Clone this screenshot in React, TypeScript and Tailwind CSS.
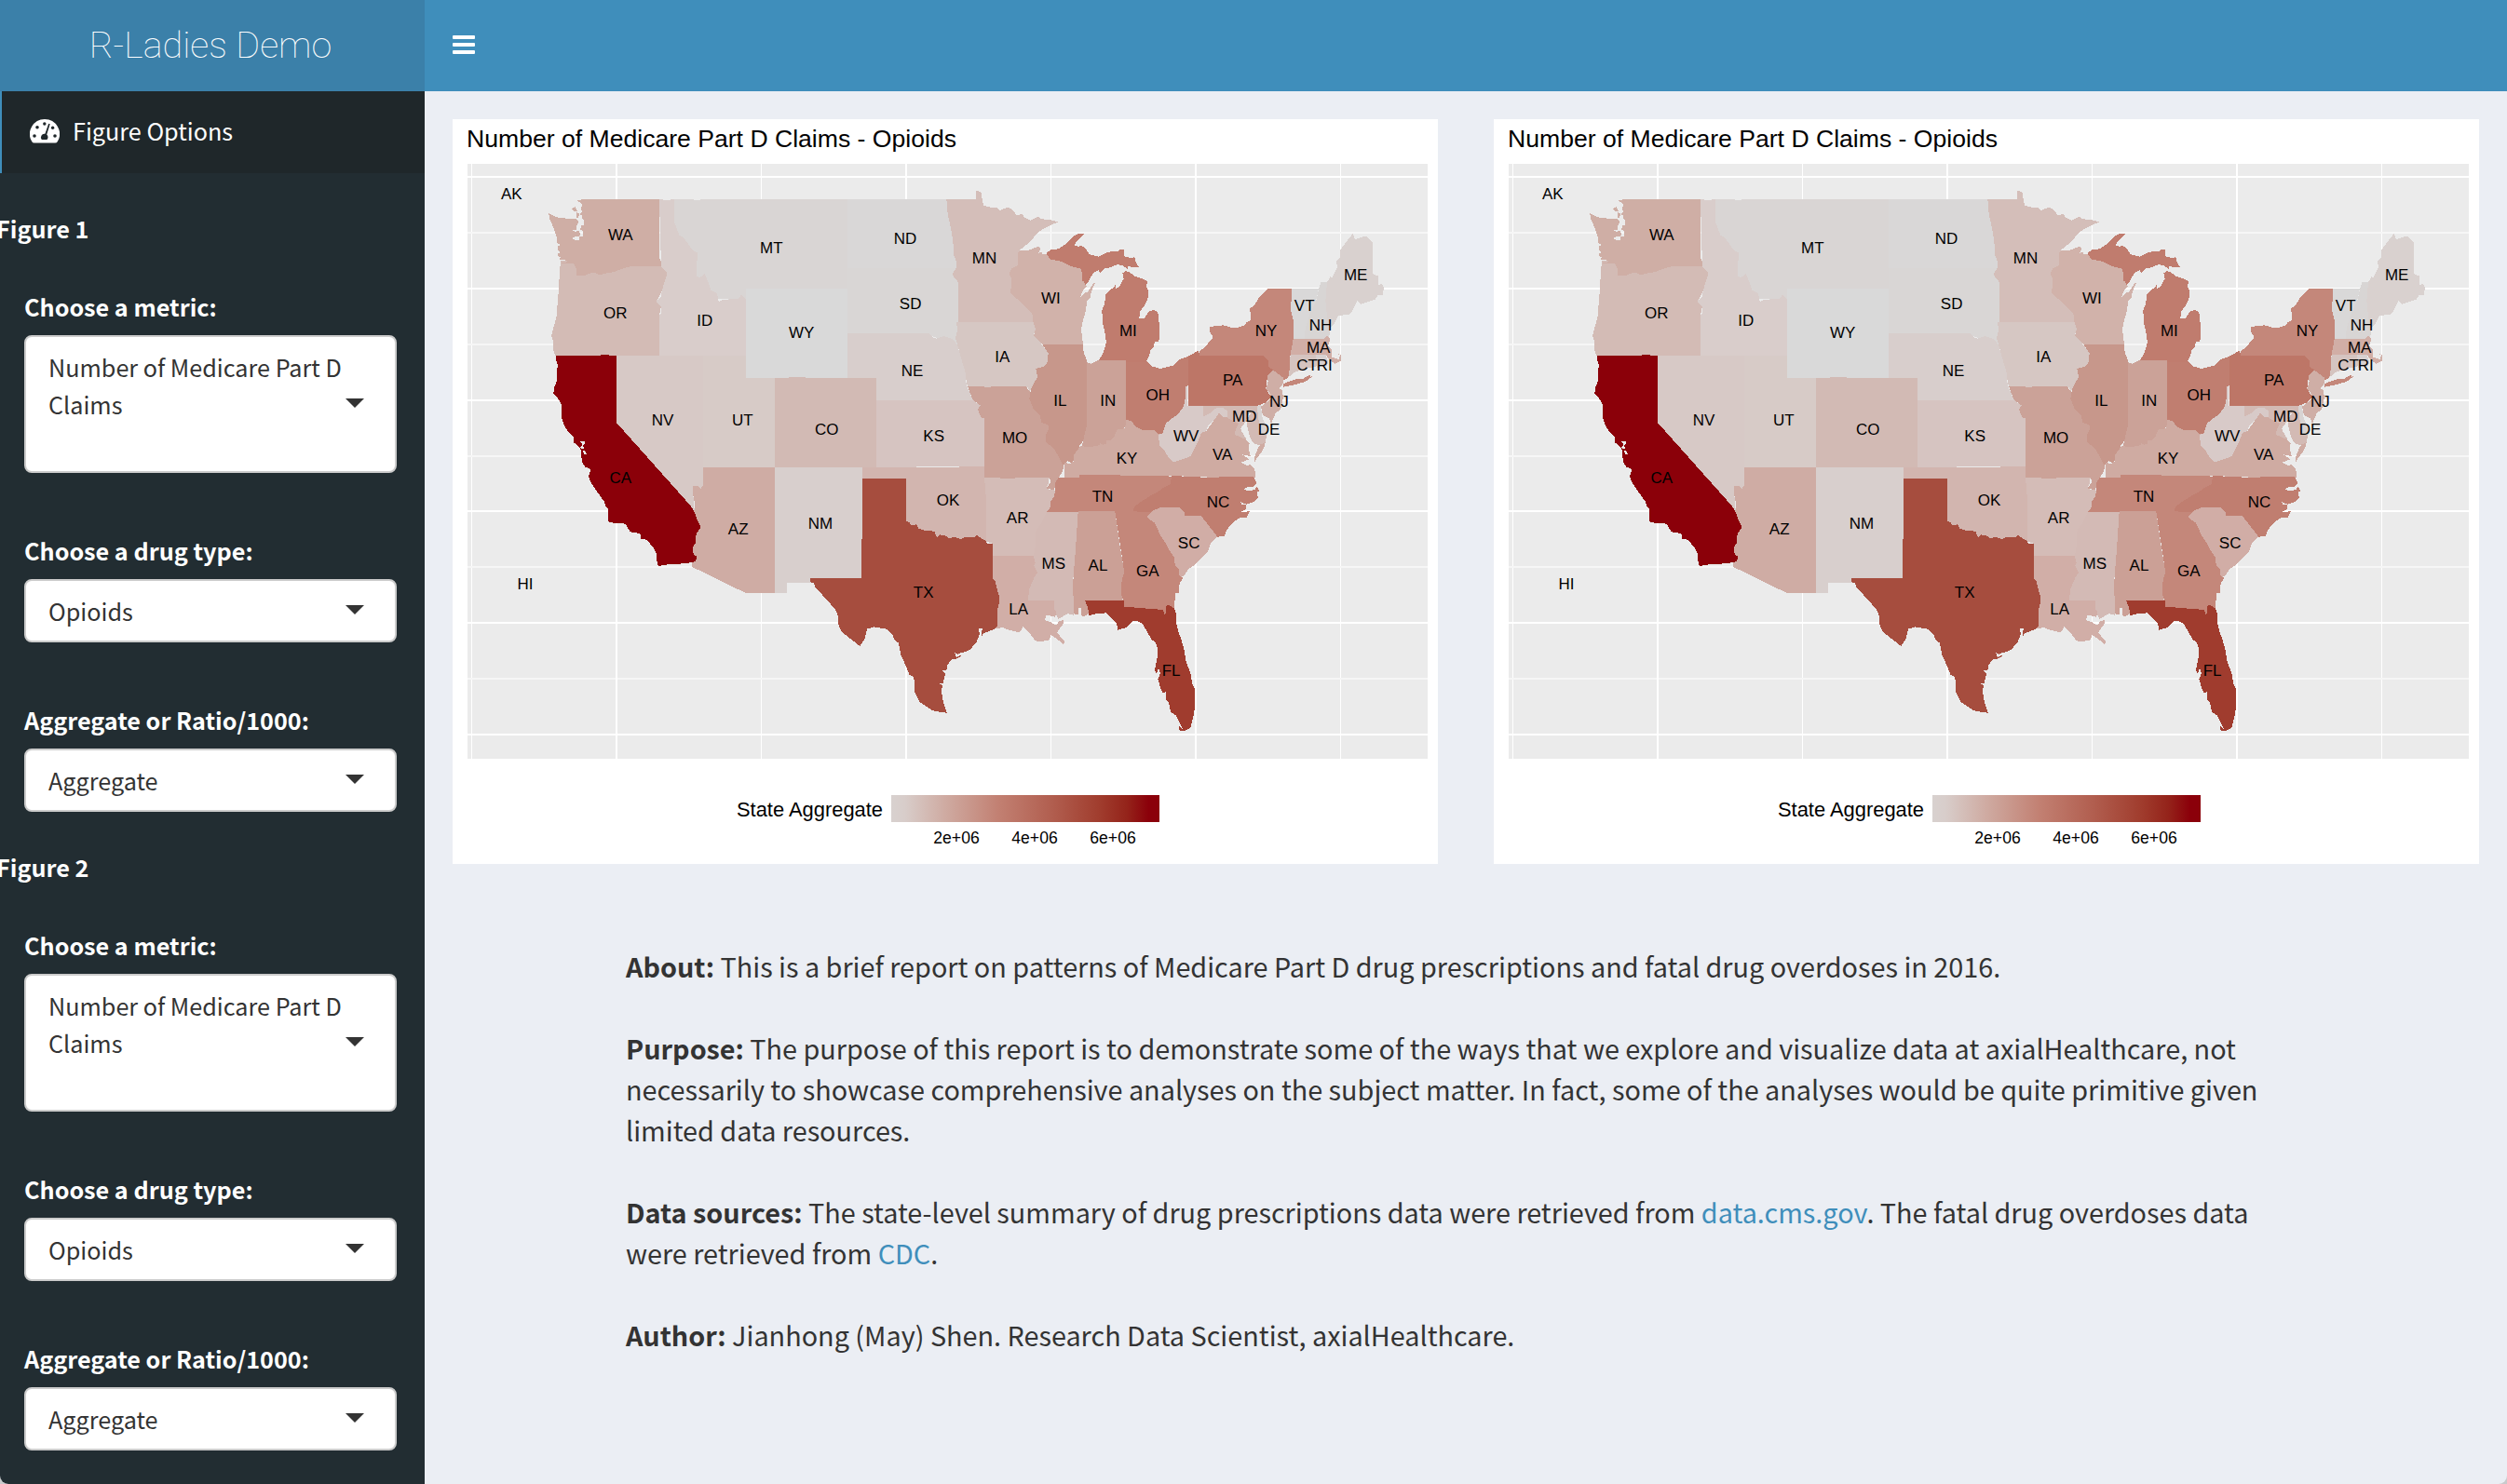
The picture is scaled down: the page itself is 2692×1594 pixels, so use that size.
import { Fragment } from "react";

type Tile = "nw" | "n" | "ne" | "w" | "s" | "se";

const TILES: Record<Tile, string> = {
  nw: "translate(480 120) scale(0.33333)",
  n: "translate(780 180) scale(0.33333)",
  ne: "translate(1100 180) scale(0.33333)",
  w: "translate(560 360) scale(0.33333)",
  s: "translate(850 480) scale(0.33333)",
  se: "translate(1120 440) scale(0.33333)",
};

type Shape = { t: Tile; c: string; p: string };

// State outlines, back to front. Each one is drawn in the units of its map tile.
const SHAPES: Shape[] = [
  { t: "nw", c: "#d9d5d4", p: "732,282 1290,282 1290,575 963,575 963,606 732,600" },
  { t: "nw", c: "#d3bbb5", p: "366,480 690,480 705,515 710,522 700,550 692,578 676,610 690,628 684,655 684,786 348,786 343,770 341,735 336,722 343,695 352,665 356,620 360,570 362,530" },
  { t: "nw", c: "#d9cdcb", p: "684,282 732,282 732,355 745,390 748,398 762,405 790,445 808,455 805,485 803,530 815,534 830,522 840,545 850,575 870,585 875,612 890,606 940,602 948,590 960,602 963,606 963,786 684,786 684,655 690,650 690,628 676,615 676,608 690,595 692,578 700,550 710,522 705,515 690,498" },
  { t: "nw", c: "#cfaea5", p: "441,282 684,282 684,472 690,485 690,498 595,498 560,507 540,516 505,522 495,527 480,520 462,520 440,529 418,527 415,500 405,488 388,490 366,487 388,484 388,480 365,476 360,474 368,468 358,466 358,457 366,453 358,448 358,432 368,429 356,425 352,400 345,378 338,362 330,345 328,327 343,335 360,342 400,345 415,346 424,352 420,365 415,372 418,380 405,380 404,384 415,386 426,384 430,400 412,402 404,408 415,415 425,415 427,402 438,402 438,385 430,380 432,366 440,365 442,352 436,345 436,335 428,330 437,322 430,312 436,300 425,290 418,286" },
  { t: "nw", c: "#cfaea5", p: "402,314 412,306 416,312 420,320 408,320" },
  { t: "nw", c: "#cfaea5", p: "418,325 425,328 424,345 417,340" },
  { t: "nw", c: "#d9d9d9", p: "963,570 1290,570 1290,858 963,858" },
  { t: "nw", c: "#ebebeb", p: "696,281 720,281 720,285 696,285" },
  { t: "nw", c: "#ebebeb", p: "795,281 815,281 815,285 795,285" },
  { t: "w", c: "#d7cbc7", p: "585,66 723,66 723,138 816,138 816,426 585,426" },
  { t: "w", c: "#d7c9c6", p: "306,66 585,66 585,490 577,495 570,486 553,487 553,515 557,565 545,560 306,290" },
  { t: "w", c: "#cfaca4", p: "585,426 816,426 816,831 722,831 550,747 550,735 540,600 557,562 557,535 553,515 553,487 570,486 577,495 585,485" },
  { t: "w", c: "#8b0009", p: "110,66 255,66 255,63 281,63 281,66 306,66 306,282 545,550 557,570 568,600 578,618 563,640 560,670 552,685 554,708 564,712 562,728 553,732 500,738 460,740 442,744 437,735 435,705 425,685 408,665 398,657 383,658 383,642 370,636 350,634 338,613 330,607 285,604 278,597 280,560 270,552 268,538 240,500 222,472 216,455 224,432 205,425 196,410 192,385 190,365 176,350 168,348 168,330 150,312 135,285 128,260 130,225 118,205 103,187 105,170 113,150 115,110 117,95 110,80" },
  { t: "w", c: "#ebebeb", p: "190,343 203,342 203,350 197,356 202,362 198,368 190,362 196,352" },
  { t: "w", c: "#ebebeb", p: "196,372 206,374 210,385 203,385" },
  { t: "w", c: "#d8cfcd", p: "816,426 1098,426 1098,655 1095,657 1095,785 930,785 932,798 855,798 855,831 816,831" },
  { t: "n", c: "#d9d7d7", p: "390,102 709,102 713,150 722,190 730,235 732,280 740,300 740,323 390,323" },
  { t: "n", c: "#d9d6d5", p: "390,323 740,323 737,335 727,345 747,370 747,498 740,500 745,520 738,550 745,573 700,555 652,540 390,534" },
  { t: "n", c: "#d8cecc", p: "390,534 652,534 668,549 678,551 700,543 730,553 745,573 752,600 762,635 770,660 773,700 790,740 795,750 483,750 483,678 390,678" },
  { t: "w", c: "#d2bab4", p: "816,138 862,138 862,135 914,135 914,138 1143,138 1143,426 816,426" },
  { t: "n", c: "#d6c4c1", p: "483,750 795,750 808,760 818,766 810,780 820,805 831,808 831,964 750,964 483,965" },
  { t: "n", c: "#d4beb9", p: "709,102 804,102 804,75 820,78 828,122 850,128 872,130 880,138 905,128 920,134 935,154 952,150 960,160 980,170 1005,158 1015,166 1040,168 1068,175 1020,198 1000,212 980,238 945,266 960,290 960,430 990,475 990,498 747,498 747,370 727,345 740,323 740,300 732,280 730,235 722,190 713,150" },
  { t: "n", c: "#d1b2aa", p: "939,275 945,268 970,268 1008,253 1012,262 1005,275 1018,272 1018,280 1035,280 1090,290 1147,330 1150,360 1160,382 1150,395 1138,420 1155,403 1162,403 1185,370 1187,374 1176,398 1172,420 1162,430 1158,460 1147,500 1143,520 1149,570 1018,570 990,545 996,520 988,498 985,470 955,440 916,405 918,355 910,345 918,325 939,315" },
  { t: "n", c: "#d6c7c3", p: "740,498 988,498 996,520 990,540 1015,568 1037,598 1035,625 1025,640 997,648 1002,675 985,705 978,722 970,708 850,710 778,708 773,690 770,660 762,635 745,573 738,550 745,520" },
  { t: "n", c: "#cba298", p: "778,706 824,706 852,708 852,706 965,706 978,722 1010,760 1070,880 1087,965 1080,985 1070,998 1055,1038 1030,1035 1045,1012 1040,998 930,1002 831,1000 831,808 820,805 810,780 818,766 795,750 790,740" },
  { t: "n", c: "#c7978b", p: "1018,570 1149,570 1151,595 1160,620 1161,830 1155,855 1150,880 1138,895 1135,920 1120,935 1115,955 1100,945 1085,960 1072,935 1055,905 1030,885 1030,860 1040,840 1035,828 1015,822 1010,800 990,780 976,745 980,720 985,705 1002,675 997,648 1025,640 1035,625 1037,598" },
  { t: "ne", c: "#cba298", p: "201,628 215,632 240,620 327,621 327,830 315,850 298,850 290,875 275,885 265,900 220,910 182,905 190,880 195,855 201,830" },
  { t: "ne", c: "#cfaba2", p: "128,998 130,965 128,950 145,955 160,945 160,925 175,905 182,898 215,900 240,895 245,888 252,893 265,890 265,880 278,880 290,865 298,845 325,840 327,812 440,830 480,948 560,990 400,996 178,992 178,998" },
  { t: "ne", c: "#c07e70", p: "327,625 395,625 410,640 437,648 480,638 500,618 528,608 528,700 522,710 520,745 513,770 495,795 470,812 465,830 455,825 445,860 432,858 418,845 400,845 380,846 360,835 345,818 327,812" },
  { t: "ne", c: "#c07c6e", p: "240,621 255,595 263,565 262,545 252,500 250,460 258,440 262,410 275,395 290,385 291,376 295,378 295,390 305,385 315,365 320,360 316,340 326,334 338,336 355,350 385,360 397,368 392,385 400,395 400,415 390,440 372,465 370,485 385,488 400,465 415,458 430,465 433,490 436,530 433,562 420,560 415,580 405,590 403,605 392,626 327,626 327,621" },
  { t: "ne", c: "#c07c6e", p: "70,275 85,265 110,262 135,245 160,220 175,213 192,214 170,235 162,250 175,255 180,250 195,258 210,280 240,287 270,272 300,270 308,265 320,265 320,285 345,292 355,287 358,302 368,320 345,320 332,318 332,328 318,316 300,312 275,322 258,325 243,340 240,330 225,338 215,350 205,370 195,381 192,365 187,365 187,340 180,325 150,318 120,303 82,295" },
  { t: "ne", c: "#cfaba2", p: "640,780 655,800 680,815 695,830 680,845 680,862 705,870 725,890 722,905 728,930 702,925 725,940 698,950 720,962 725,955 742,972 745,998 600,998 475,993 400,993 430,975 475,948 510,940 535,930 560,880 570,855 585,850 610,815 625,790" },
  { t: "ne", c: "#cfaba2", p: "778,865 775,895 765,915 750,935 740,952 742,930 752,905 762,890" },
  { t: "ne", c: "#d3bab4", p: "575,768 755,768 755,820 765,850 780,862 777,885 755,895 738,888 727,870 720,845 715,815 730,790 720,795 712,820 697,840 700,850 717,878 690,865 678,862 680,845 690,825 655,808 640,785 620,780 600,795 575,802" },
  { t: "ne", c: "#d8d3d2", p: "749,768 762,765 765,800 780,840 783,862 765,862 758,840" },
  { t: "ne", c: "#d8cac8", p: "525,703 526,768 575,768 577,802 600,790 620,773 640,775 655,785 655,805 640,803 628,790 610,815 590,835 585,850 570,855 560,880 545,910 535,930 510,940 480,950 465,935 450,910 435,895 432,860 445,858 455,825 470,812 495,795 513,770 518,745 520,705" },
  { t: "ne", c: "#c4877a", p: "565,606 563,592 580,580 605,550 605,540 597,530 597,513 640,508 665,515 690,515 710,508 715,498 730,492 730,470 724,455 740,445 755,420 785,391 862,391 862,450 858,460 866,490 866,555 857,600 853,662 850,675 838,685 800,652 770,640 770,606" },
  { t: "ne", c: "#c4877a", p: "833,708 833,698 855,688 880,680 895,682 912,672 920,668 922,674 930,672 905,690 870,700 848,704" },
  { t: "ne", c: "#bd7667", p: "528,608 560,590 565,606 770,606 785,620 785,640 800,652 783,672 778,712 795,740 775,758 750,768 528,768" },
  { t: "ne", c: "#cfaea6", p: "800,652 835,678 832,700 820,712 832,718 833,745 825,780 810,790 795,825 788,808 768,798 762,770 795,745 792,730 778,712 785,690 783,672" },
  { t: "ne", c: "#d9d8d8", p: "862,391 948,391 930,470 905,553 866,553 866,490 858,460" },
  { t: "ne", c: "#d8d5d4", p: "948,391 955,370 975,368 985,510 982,545 970,554 902,554 905,520 920,470 940,430" },
  { t: "ne", c: "#d9d1cf", p: "975,370 985,352 992,355 1008,320 1005,300 1018,290 1018,265 1040,235 1058,213 1065,232 1085,225 1100,221 1121,240 1121,342 1140,350 1140,378 1150,375 1158,385 1155,410 1140,410 1130,425 1100,435 1085,440 1072,430 1060,455 1050,472 1010,478 1000,500 985,517 975,480 970,430" },
  { t: "ne", c: "#d1aea6", p: "866,553 965,553 975,543 985,552 978,575 990,588 990,610 1012,618 1018,605 1010,600 1020,603 1020,622 1000,632 985,622 970,603 857,603" },
  { t: "ne", c: "#d5c4c0", p: "857,602 940,604 942,640 905,648 870,660 850,676 853,662" },
  { t: "ne", c: "#d8d0d0", p: "940,604 970,603 978,625 975,640 942,645" },
  { t: "se", c: "#c4877a", p: "50,218 117,218 117,209 248,210 248,213 390,214 420,215 420,250 320,328 12,329 25,300 22,292 30,275 40,260 40,235" },
  { t: "se", c: "#c4877a", p: "232,328 350,328 460,480 440,535 452,540 440,560 437,590 427,592 422,640 400,632 397,660 390,664 387,647 262,637 258,615 252,595 254,545 262,525" },
  { t: "se", c: "#c07e70", p: "415,213 515,218 625,217 678,216 686,232 688,248 697,262 690,265 692,285 680,297 655,305 635,297 640,305 655,308 655,320 635,330 665,328 657,347 630,350 605,370 590,390 585,408 560,410 510,343 455,345 380,316 345,330 290,328 293,315 310,300 330,288 350,275 370,265 390,250 410,240" },
  { t: "se", c: "#ebebeb", p: "645,258 662,248 676,250 684,240 690,246 682,258 665,262" },
  { t: "se", c: "#d1ada6", p: "336,345 350,328 375,316 440,316 455,330 457,342 510,343 562,410 540,430 530,460 510,480 490,500 470,512 455,535 445,540 437,530 437,515 425,500 422,475 408,455 395,430 378,405 360,365 345,355" },
  { t: "se", c: "#cba096", p: "113,328 232,328 248,440 262,525 254,545 252,595 258,617 150,620 145,660 130,667 122,660 122,640 115,640 113,660 98,658 96,555 98,545 105,430" },
  { t: "s", c: "#d3bab5", p: "810,209 923,209 915,330 906,440 910,543 890,537 860,555 840,520 760,495 760,400 780,350 780,270" },
  { t: "s", c: "#d4bcb7", p: "621,99 720,102 720,99 830,99 828,115 820,135 850,140 845,160 835,175 832,200 822,210 805,245 790,265 785,280 787,310 780,352 648,352 648,312 627,305 628,180" },
  { t: "s", c: "#d1aea7", p: "648,351 780,351 785,375 780,382 792,405 782,420 765,460 762,495 846,495 845,520 852,530 850,550 840,545 820,543 816,558 835,565 852,575 862,562 875,558 875,570 855,598 880,628 874,637 866,628 845,612 835,606 830,622 800,628 785,625 765,598 745,580 735,598 700,590 680,582 652,587 660,550 668,490 655,430 648,425" },
  { t: "s", c: "#d2b5af", p: "228,66 540,66 540,64 621,64 621,100 628,180 627,310 360,290 369,102 228,102" },
  { t: "s", c: "#a64d3e", p: "228,102 369,102 369,240 380,243 385,252 403,250 408,262 430,270 460,272 468,292 478,283 500,288 505,295 525,290 545,298 560,290 590,290 597,285 625,303 630,311 648,312 648,425 655,430 668,480 668,505 662,530 662,580 655,587 620,600 612,610 614,585 604,585 605,605 595,630 575,653 548,665 545,675 530,683 518,683 500,705 502,718 485,721 495,730 488,762 475,764 486,768 483,790 488,820 500,857 480,855 455,850 412,822 397,790 394,742 380,735 370,710 352,670 345,632 332,622 325,605 305,587 265,580 243,587 235,620 220,642 160,595 150,570 150,545 140,522 115,495 75,450 72,438 60,436 60,424 225,422 225,297 228,297" },
  { t: "s", c: "#ebebeb", p: "526,664 535,668 550,662 545,672 530,678" },
  { t: "se", c: "#a03c2e", p: "135,615 260,615 262,635 387,645 392,662 397,655 397,632 405,630 422,640 430,660 430,690 436,715 445,740 455,775 460,810 475,850 480,880 489,900 489,960 483,995 475,1025 458,1035 440,1036 438,1020 450,1030 440,1010 428,985 412,975 405,945 395,935 395,910 385,912 378,895 370,868 378,850 372,832 366,850 360,840 368,800 368,765 360,747 350,742 335,715 320,690 305,682 290,682 270,702 240,710 238,690 220,672 205,655 175,657 148,663 145,640" },
];

type Label = [string, Tile, number, number];
const LABELS: Label[] = [
  ["AK", "nw", 208, 283], ["WA", "nw", 559, 413], ["OR", "nw", 542, 666], ["ID", "nw", 830, 690],
  ["MT", "nw", 1045, 457], ["WY", "nw", 1142, 729], ["NV", "nw", 695, 1012], ["UT", "nw", 952, 1012],
  ["ND", "n", 576, 247], ["MN", "n", 831, 309], ["SD", "n", 593, 457], ["WI", "n", 1045, 438],
  ["NE", "n", 599, 673], ["IA", "n", 889, 628], ["IL", "n", 1075, 767], ["CO", "n", 323, 861],
  ["KS", "n", 668, 882], ["MO", "n", 929, 888], ["MI", "ne", 334, 543], ["NY", "ne", 779, 543],
  ["VT", "ne", 902, 462], ["NH", "ne", 954, 526], ["ME", "ne", 1067, 363], ["MA", "ne", 947, 598],
  ["CT", "ne", 911, 654], ["RI", "ne", 967, 654], ["IN", "ne", 269, 767], ["OH", "ne", 430, 750],
  ["PA", "ne", 671, 702], ["NJ", "ne", 820, 772], ["MD", "ne", 709, 819], ["DE", "ne", 788, 862],
  ["WV", "ne", 521, 881], ["KY", "ne", 330, 954], ["VA", "ne", 638, 942], ["CA", "w", 319, 477],
  ["AZ", "w", 698, 642], ["NM", "w", 963, 625], ["HI", "w", 12, 819], ["OK", "s", 504, 189],
  ["AR", "s", 728, 247], ["MS", "s", 844, 394], ["AL", "s", 987, 400], ["GA", "s", 1147, 418],
  ["TX", "s", 425, 487], ["LA", "s", 731, 540], ["TN", "s", 1002, 178], ["NC", "se", 564, 316],
  ["SC", "se", 470, 447], ["FL", "se", 413, 857],
];

const MAJOR_X = [661, 972, 1283];
const MINOR_X = [506, 817, 1128, 1439];
const MAJOR_Y = [189, 309, 429, 548, 668, 788];
const MINOR_Y = [249, 369, 489, 608, 728];

function ClaimsMap({ id }: { id: string }) {
  return (
    <svg
      viewBox="486 128 1058 800"
      className="block h-[800px] w-[1058px] bg-white font-['Liberation_Sans',Arial,sans-serif]"
    >
      <defs>
        <linearGradient id={id}>
          <stop offset="0" stopColor="#d8d1cf" />
          <stop offset="0.05" stopColor="#d8cdca" />
          <stop offset="0.2" stopColor="#cfaba2" />
          <stop offset="0.4" stopColor="#c28072" />
          <stop offset="0.6" stopColor="#b15e4f" />
          <stop offset="0.78" stopColor="#a03c2d" />
          <stop offset="0.88" stopColor="#94231a" />
          <stop offset="0.96" stopColor="#8b000a" />
          <stop offset="1" stopColor="#8b000a" />
        </linearGradient>
      </defs>
      <text x="501" y="158" fontSize="26.4" textLength="526" lengthAdjust="spacingAndGlyphs">
        Number of Medicare Part D Claims - Opioids
      </text>
      <g shapeRendering="crispEdges">
        <rect x="502" y="176" width="1031" height="639" fill="#ebebeb" />
        {MINOR_X.map((x) => (
          <rect key={x} x={x} y="176" width="1" height="639" fill="#fff" />
        ))}
        {MINOR_Y.map((y) => (
          <rect key={y} x="502" y={y} width="1031" height="2" fill="#f6f6f6" />
        ))}
        {MAJOR_X.map((x) => (
          <rect key={x} x={x} y="176" width="2" height="639" fill="#fff" />
        ))}
        {MAJOR_Y.map((y) => (
          <rect key={y} x="502" y={y} width="1031" height="2" fill="#fff" />
        ))}
        {SHAPES.map((s, i) => (
          <polygon key={i} points={s.p} fill={s.c} transform={TILES[s.t]} />
        ))}
      </g>
      {LABELS.map(([name, tile, x, y]) => (
        <text key={name} x={x} y={y} fontSize="51" textAnchor="middle" transform={TILES[tile]}>
          {name}
        </text>
      ))}
      <text x="791" y="877" fontSize="22" textLength="157" lengthAdjust="spacingAndGlyphs">
        State Aggregate
      </text>
      <rect x="957" y="854" width="288" height="29" fill={`url(#${id})`} />
      {["2e+06", "4e+06", "6e+06"].map((t, i) => (
        <text key={t} x={1027 + i * 84} y="906" fontSize="17.6" textAnchor="middle">
          {t}
        </text>
      ))}
    </svg>
  );
}

function Caret({ className }: { className: string }) {
  return (
    <svg viewBox="0 0 20 10" className={"h-[10px] w-5 shrink-0 " + className}>
      <path d="M0 0H20L10 10Z" fill="#333" />
    </svg>
  );
}

function Picker({ label, value, tall, last }: { label: string; value: string; tall?: boolean; last?: boolean }) {
  return (
    <div className={tall ? "h-[262px]" : last ? "h-[158px]" : "h-[182px]"}>
      <div className="h-[51px] text-[25.2px] leading-[40px] font-bold text-white">{label}</div>
      <div
        className={
          "flex items-start justify-between rounded-[8px] border-2 border-[#cccccc] bg-white pt-3 pr-[33px] pl-6 text-[#333333] " +
          (tall ? "h-[148px]" : "h-[68px]")
        }
      >
        <span className="w-[325px] text-[25.2px] leading-[40px]">{value}</span>
        <Caret className={tall ? "mt-[54px]" : "mt-[14px]"} />
      </div>
    </div>
  );
}

function FigureControls({ title }: { title: string }) {
  return (
    <Fragment>
      <div className="-ml-[4px] h-[84px] text-[25.2px] leading-[40px] font-bold text-white">{title}</div>
      <div className="w-[426px] pl-[26px]">
        <Picker label="Choose a metric:" value="Number of Medicare Part D Claims" tall />
        <Picker label="Choose a drug type:" value="Opioids" />
        <Picker label="Aggregate or Ratio/1000:" value="Aggregate" last />
      </div>
    </Fragment>
  );
}

function GaugeIcon() {
  return (
    <svg viewBox="0 0 32 26" className="h-[26px] w-8">
      <path
        fill="#fff"
        d="M16 0A16 16 0 0 0 2.2 24.1Q3 25.6 4.8 25.6H27.2Q29 25.6 29.8 24.1A16 16 0 0 0 16 0Z"
      />
      <g fill="#1f272a">
        <circle cx="15.8" cy="5" r="1.7" />
        <circle cx="8" cy="8.8" r="1.8" />
        <circle cx="5" cy="18" r="1.8" />
        <circle cx="24.6" cy="9.2" r="1.7" />
        <circle cx="27" cy="18" r="1.8" />
        <path d="M20.2 4.8L21.7 5.3L18.2 16.4A3.8 3.8 0 0 1 18.4 22H12.8A3.8 3.8 0 0 1 16.4 15.8Z" />
      </g>
    </svg>
  );
}

export default function App() {
  return (
    <div className="h-[1594px] w-[2692px] bg-[#c9cacc]">
      <div className="flex h-[1594px] w-[2692px] flex-col overflow-hidden rounded-b-[9px] bg-[#ebeef4] font-['Noto_Sans_CJK_SC','Noto_Sans',sans-serif]">
        <header className="flex h-[98px] shrink-0 bg-[#3f8ebb]">
          <div className="flex w-[456px] items-center justify-center bg-[#3b80a9] pr-1 font-['Roboto',sans-serif] text-[39.5px] font-thin text-white">
            R-Ladies Demo
          </div>
          <div className="flex flex-col gap-1 pt-[38px] pl-[30px]">
            <div className="h-1 w-6 rounded-[1px] bg-white" />
            <div className="h-1 w-6 rounded-[1px] bg-white" />
            <div className="h-1 w-6 rounded-[1px] bg-white" />
          </div>
        </header>
        <div className="flex min-h-0 flex-1">
          <aside className="w-[456px] shrink-0 overflow-hidden bg-[#222d32]">
            <div className="flex h-[88px] items-center gap-[14px] border-l-2 border-[#3f8ebb] bg-[#1f272a] pb-[2px] pl-[30px] text-[25.2px] text-white">
              <GaugeIcon />
              <span>Figure Options</span>
            </div>
            <div className="h-[39px]" />
            <FigureControls title="Figure 1" />
            <FigureControls title="Figure 2" />
          </aside>
          <main className="flex-1">
            <div className="flex gap-[60px] pt-[30px] pl-[30px]">
              <ClaimsMap id="scale-left" />
              <ClaimsMap id="scale-right" />
            </div>
            <div className="mt-[88px] ml-[216px] w-[1788px] space-y-[44px] text-[28.8px] leading-[44px] text-[#333333]">
              <p>
                <b>About:</b> This is a brief report on patterns of Medicare Part D drug prescriptions and fatal drug overdoses in 2016.
              </p>
              <p>
                <b>Purpose:</b> The purpose of this report is to demonstrate some of the ways that we explore and visualize data at axialHealthcare, not<br />
                necessarily to showcase comprehensive analyses on the subject matter. In fact, some of the analyses would be quite primitive given<br />
                limited data resources.
              </p>
              <p>
                <b>Data sources:</b> The state-level summary of drug prescriptions data were retrieved from{" "}
                <a className="text-[#3f8ebb]">data.cms.gov</a>. The fatal drug overdoses data<br />
                were retrieved from <a className="text-[#3f8ebb]">CDC</a>.
              </p>
              <p>
                <b>Author:</b> Jianhong (May) Shen. Research Data Scientist, axialHealthcare.
              </p>
            </div>
          </main>
        </div>
      </div>
    </div>
  );
}
